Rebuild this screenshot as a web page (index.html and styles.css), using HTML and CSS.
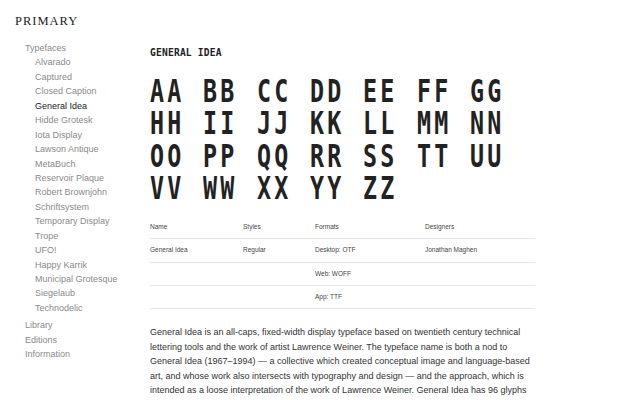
FILE: index.html
```html
<!DOCTYPE html>
<html>
<head>
<meta charset="utf-8">
<link rel="stylesheet" href="styles.css">
</head>
<body>
<div class="page">
  <aside class="sidebar">
    <div class="brand">PRIMARY</div>
    <ul class="nav">
      <li class="nav-item">Typefaces
        <ul class="sub">
          <li>Alvarado</li>
          <li>Captured</li>
          <li>Closed Caption</li>
          <li class="active">General Idea</li>
          <li>Hidde Grotesk</li>
          <li>Iota Display</li>
          <li>Lawson Antique</li>
          <li>MetaBuch</li>
          <li>Reservoir Plaque</li>
          <li>Robert Brownjohn</li>
          <li>Schriftsystem</li>
          <li>Temporary Display</li>
          <li>Trope</li>
          <li>UFO!</li>
          <li>Happy Karrik</li>
          <li>Municipal Grotesque</li>
          <li>Siegelaub</li>
          <li>Technodelic</li>
        </ul>
      </li>
      <li class="nav-item">Library</li>
      <li class="nav-item">Editions</li>
      <li class="nav-item">Information</li>
    </ul>
  </aside>
  <main class="main">
    <h1 class="title">GENERAL IDEA</h1>
    <div class="glyphs">
      <span class="g"><span>AA</span></span><span class="g"><span>BB</span></span><span class="g"><span>CC</span></span><span class="g"><span>DD</span></span><span class="g"><span>EE</span></span><span class="g"><span>FF</span></span><span class="g"><span>GG</span></span>
      <span class="g"><span>HH</span></span><span class="g"><span>II</span></span><span class="g"><span>JJ</span></span><span class="g"><span>KK</span></span><span class="g"><span>LL</span></span><span class="g"><span>MM</span></span><span class="g"><span>NN</span></span>
      <span class="g"><span>OO</span></span><span class="g"><span>PP</span></span><span class="g"><span>QQ</span></span><span class="g"><span>RR</span></span><span class="g"><span>SS</span></span><span class="g"><span>TT</span></span><span class="g"><span>UU</span></span>
      <span class="g"><span>VV</span></span><span class="g"><span>WW</span></span><span class="g"><span>XX</span></span><span class="g"><span>YY</span></span><span class="g"><span>ZZ</span></span>
    </div>
    <div class="table">
      <div class="row head"><div>Name</div><div>Styles</div><div>Formats</div><div>Designers</div></div>
      <div class="row"><div>General Idea</div><div>Regular</div><div>Desktop: OTF</div><div>Jonathan Maghen</div></div>
      <div class="row"><div></div><div></div><div>Web: WOFF</div><div></div></div>
      <div class="row"><div></div><div></div><div>App: TTF</div><div></div></div>
    </div>
    <p class="desc">General Idea is an all-caps, fixed-width display typeface based on twentieth century technical lettering tools and the work of artist Lawrence Weiner. The typeface name is both a nod to General Idea (1967–1994) — a collective which created conceptual image and language-based art, and whose work also intersects with typography and design — and the approach, which is intended as a loose interpretation of the work of Lawrence Weiner. General Idea has 96 glyphs</p>
  </main>
</div>
</body>
</html>
```
FILE: styles.css
```css
html, body {
  margin: 0;
  padding: 0;
  background: #ffffff;
  overflow: hidden;
}
.page {
  display: flex;
  width: 640px;
  height: 400px;
}
.sidebar {
  width: 135px;
  flex: none;
  padding: 14px 0 0 15px;
}
.brand {
  font-family: "Liberation Serif", serif;
  font-size: 12.5px;
  line-height: 15px;
  letter-spacing: 1px;
  color: #222;
}
.nav, .sub {
  list-style: none;
  margin: 0;
  padding: 0;
}
.nav {
  margin-top: 12px;
  padding-left: 10px;
  font-family: "Liberation Sans", Arial, sans-serif;
  font-size: 9px;
  line-height: 14.44px;
  color: #8a8a8a;
}
.sub {
  padding-left: 10px;
  margin-bottom: 3px;
}
.sub .active {
  color: #222;
}
.main {
  flex: none;
  width: 385px;
  padding-top: 48px;
}
.title {
  margin: 0;
  font-family: "DejaVu Sans Mono", monospace;
  font-weight: bold;
  font-size: 9.6px;
  line-height: 10px;
  letter-spacing: 0.2px;
  color: #222;
}
.glyphs {
  margin-top: 17px;
  display: grid;
  grid-template-columns: repeat(7, 53.33px);
  font-family: "DejaVu Sans Mono", monospace;
  font-weight: bold;
  font-size: 31.5px;
  line-height: 32.3px;
  color: #222;
}
.g {
  display: block;
  white-space: nowrap;
}
.g span {
  display: inline-block;
  transform: scaleX(0.74);
  transform-origin: 0 0;
  letter-spacing: 4.5px;
}
.table {
  margin-top: 12px;
  font-family: "Liberation Sans", Arial, sans-serif;
  font-size: 6.5px;
  color: #444;
}
.row {
  display: grid;
  grid-template-columns: 93px 72px 110px 110px;
  line-height: 22.3px;
  border-bottom: 1px solid #e6e6e6;
}
.desc {
  margin: 16px 0 0 0;
  width: 381px;
  font-family: "Liberation Sans", Arial, sans-serif;
  font-size: 9px;
  line-height: 14.4px;
  color: #333;
}
```
